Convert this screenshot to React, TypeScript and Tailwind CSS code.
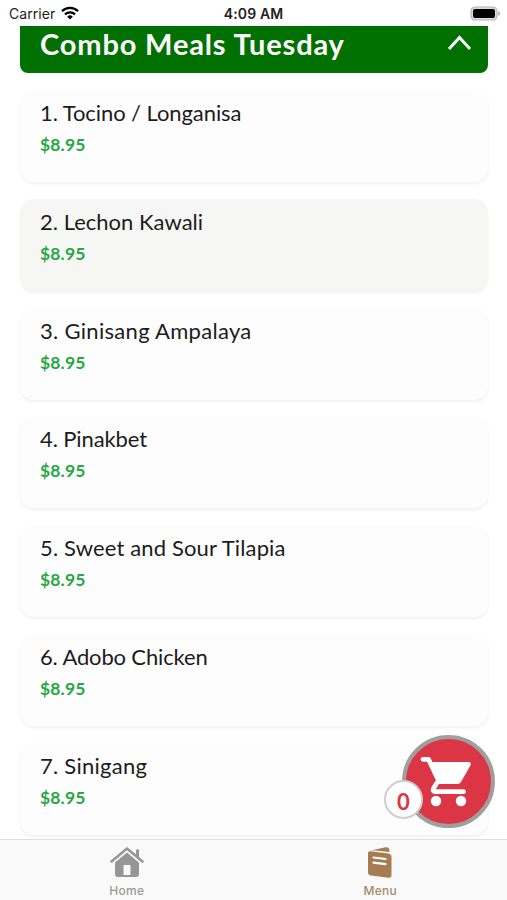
const meals = [
    {name: '1. Tocino / Longanisa', price: '$8.95', tracking: 'tracking-[-0.08px]'},
    {name: '2. Lechon Kawali', price: '$8.95', tracking: 'tracking-[0.02px]', active: true},
    {name: '3. Ginisang Ampalaya', price: '$8.95', tracking: 'tracking-[0.3px]'},
    {name: '4. Pinakbet', price: '$8.95', tracking: 'tracking-[-0.1px]'},
    {name: '5. Sweet and Sour Tilapia', price: '$8.95', tracking: 'tracking-[0.14px]'},
    {name: '6. Adobo Chicken', price: '$8.95', tracking: 'tracking-[-0.15px]'},
    {name: '7. Sinigang', price: '$8.95', tracking: 'tracking-[0.25px]'},
]

function StatusBar(){
    return (
        <div className="grid grid-cols-3 h-[26px] shrink-0 items-center bg-white px-[9px] pt-px font-[Inter,sans-serif] text-[14px] text-[#222]">
            <div className="flex items-center gap-[6px]">
                <span className="tracking-[0.05px]">Carrier</span>
                <svg className="w-[18px] h-[14px] -mt-px" viewBox="0 0 18 14" fill="none" stroke="#000" strokeWidth="2.3">
                    <path d="M1 5.2a11.5 11.5 0 0 1 16 0"/>
                    <path d="M4 8.4a7.2 7.2 0 0 1 10 0"/>
                    <path d="M9 13.5 6.2 10.7a4 4 0 0 1 5.6 0Z" fill="#000" stroke="none"/>
                </svg>
            </div>
            <div className="text-center font-semibold tracking-[0.15px] whitespace-nowrap">4:09 AM</div>
            <div className="flex justify-end">
                <svg className="w-[31px] h-[15px] -mr-[3px] -mt-px" viewBox="0 0 31 15">
                    <rect x="1" y="1" width="26" height="13" rx="4" fill="#ddd" stroke="#b5b5b5" strokeWidth="1.2"/>
                    <rect x="3" y="3" width="22" height="9" rx="2" fill="#000"/>
                    <path d="M28.3 5.2c2.2.6 2.2 4 0 4.6Z" fill="#aaa"/>
                </svg>
            </div>
        </div>
    )
}

function MealCard({name, price, tracking, active}: {name: string; price: string; tracking: string; active?: boolean}){
    return (
        <div className={`h-[92px] shrink-0 rounded-[14px] px-5 pt-[9px] shadow-[0_2px_3px_rgba(0,0,0,0.06)] ${active ? 'bg-[#f6f6f4]' : 'bg-[#fdfdfd]'}`}>
            <div className={`text-[22px] leading-7 text-[#1c1c1c] whitespace-nowrap ${tracking}`}>{name}</div>
            <div className="mt-[6px] text-[17.5px] leading-6 font-bold text-[#28a745] tracking-[0.15px]">{price}</div>
        </div>
    )
}

function CartButton(){
    return (
        <button className="absolute left-[402px] top-[735px] w-[93px] h-[93px] rounded-full border-4 border-[#a09fa0] bg-[#dc3545]">
            <svg className="absolute left-[12px] top-[15px] w-[56px] h-[56px]" viewBox="0 0 56 56" fill="#fff">
                <path d="M5 5.3h5.5l9 18.5M18.500 29.500l-3 5q-1.200 3.200 2.500 3.200h27.500" fill="none" stroke="#fff" strokeWidth="4.8" strokeLinecap="round" strokeLinejoin="round"/>
                <path d="M12 8h38.500q3.200.3 2 3.200l-9.500 16.800q-1.200 2-3.500 2H19.500L11 11Z"/>
                <circle cx="18" cy="47" r="5.2"/>
                <circle cx="43" cy="47" r="5.2"/>
            </svg>
            <span className="absolute -left-[22px] top-[41px] flex w-[39px] h-[39px] items-center justify-center rounded-full border-2 border-[#cfcdcf] bg-white pt-[4px] text-[22px] leading-none font-bold text-[#dc3545]">0</span>
        </button>
    )
}

function TabBar(){
    return (
        <nav className="grid grid-cols-2 h-[61px] shrink-0 border-t border-[#dedede] bg-[#f9f9f9] font-[Inter,sans-serif] text-[12px] leading-4 font-medium">
            <div className="flex flex-col items-center pt-[6px] text-[#999]">
                <svg className="w-[34px] h-[32px]" viewBox="0 0 34 32" fill="#969696">
                    <path d="M1.500 15.500 17 2.500l15.500 13" fill="none" stroke="#969696" strokeWidth="2.5" strokeLinecap="round" strokeLinejoin="round"/>
                    <path d="M26 3.500h3v8l-3-2.500Z"/>
                    <path fillRule="evenodd" d="M17 6.500 29 16.500V28q0 3-3 3H8q-3 0-3-3V16.500ZM13.500 19v10h7V19Z"/>
                </svg>
                <span className="mt-[5px] tracking-[0.3px]">Home</span>
            </div>
            <div className="flex flex-col items-center pt-[6px] text-[#a78a68]">
                <svg className="w-[26px] h-[32px]" viewBox="0 0 26 32">
                    <path d="M4 4.500 18.500 1.300q3-.5 3.800 1.700V6L8 4.600Z" fill="#a67c52"/>
                    <path d="M1 7.200Q1 5 3.500 5.300L21.500 7.500Q24.500 8 24.500 11V29q0 3-3 2.700L4 29.500q-3-.5-3-3.500Z" fill="#a67c52"/>
                    <path d="m6.500 11.500 12 1.500M6.500 16.700l12 1.500" stroke="#fff" strokeWidth="2.2" strokeLinecap="round"/>
                </svg>
                <span className="mt-[5px] tracking-[0.3px]">Menu</span>
            </div>
        </nav>
    )
}

export default function App(){
    return (
        <div className="relative flex flex-col w-[507px] h-[900px] overflow-hidden bg-white font-[Lato,sans-serif]">
            <StatusBar/>
            <main className="flex flex-col flex-1 min-h-0 overflow-hidden px-5">
                <header className="flex h-[47px] w-[468px] shrink-0 items-start justify-between rounded-b-lg bg-[#007000] pl-5 pr-4">
                    <h1 className="text-[29px] leading-[36px] font-bold text-white whitespace-nowrap tracking-[0.85px]">Combo Meals Tuesday</h1>
                    <svg className="mt-[8px] w-[25px] h-[17px]" viewBox="0 0 25 17" fill="none" stroke="#fff" strokeWidth="3">
                        <path d="M2 15 12.500 3.500 23 15"/>
                    </svg>
                </header>
                <div className="mt-[17px] flex flex-col w-[468px] gap-[16.8px]">
                    {meals.map(meal => <MealCard key={meal.name} {...meal}/>)}
                </div>
            </main>
            <TabBar/>
            <CartButton/>
        </div>
    )
}
